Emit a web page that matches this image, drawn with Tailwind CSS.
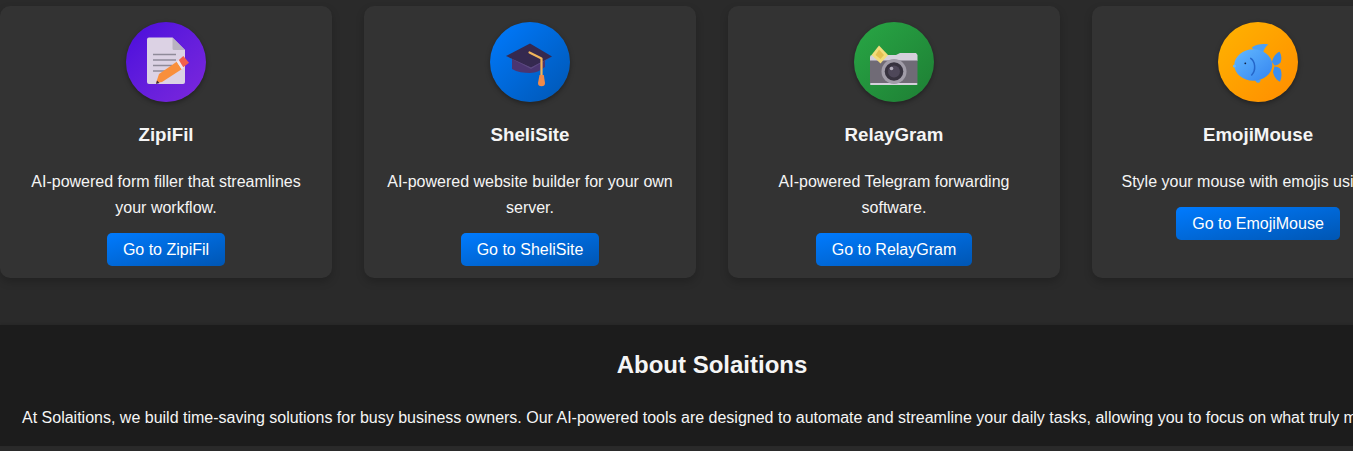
<!doctype html>
<html lang="en">
<head>
<meta charset="utf-8">
<title>Solaitions</title>
<script src="https://cdn.jsdelivr.net/npm/@tailwindcss/browser@4"></script>
</head>
<body class="m-0 h-[451px] overflow-hidden bg-[#2a2a2a] font-['Liberation_Sans',Arial,sans-serif] text-[#f5f5f5]">
<main class="w-[1424px]">
  <section class="grid grid-cols-[332px_332px_332px_332px] gap-8 pt-[6px]">

    <article class="flex h-[272px] flex-col items-center rounded-[10px] bg-[#333333] px-4 pt-4 text-center shadow-[0_4px_8px_rgba(0,0,0,0.2)]">
      <div class="size-20 rounded-full bg-linear-to-br from-[#4a08dc] to-[#7d26dc] shadow-[0_2px_5px_rgba(0,0,0,0.35)]">
        <svg viewBox="0 0 80 80" class="size-20">
          <path d="M23 15.5H46.5L59 28V60a2 2 0 0 1-2 2H23a2 2 0 0 1-2-2V17.5a2 2 0 0 1 2-2Z" fill="#dcd2e4"/>
          <path d="M46.5 15.5 59 28H48a1.5 1.5 0 0 1-1.5-1.5Z" fill="#b9b2c0"/>
          <path d="M27 32.5H50M27 38H50M27 43.5H46M27 49H39" stroke="#8f8a99" stroke-width="1.4"/>
          <path d="M30 61 33 52 50.7 39.7 55.7 47.3 36 60Z" fill="#f98f3c"/>
          <path d="M50.7 39.7 54 37.3 58.5 44.7 55.7 47.3Z" fill="#efe6ee"/>
          <path d="M52.8 38 57.3 34 63 40.7 57.3 45.3Z" fill="#f2604a"/>
          <path d="M30 62 31 58.5 33.5 61Z" fill="#3a2a3a"/>
        </svg>
      </div>
      <h3 class="mt-[18px] text-[18.72px] leading-[29px] font-bold">ZipiFil</h3>
      <p class="mt-5 text-base leading-[26px]">AI-powered form filler that streamlines your workflow.</p>
      <a class="mt-3 rounded-[5px] bg-linear-to-br from-[#007bff] to-[#0056b3] px-4 py-[7px] text-base leading-[19px] text-white">Go to ZipiFil</a>
    </article>

    <article class="flex h-[272px] flex-col items-center rounded-[10px] bg-[#333333] px-4 pt-4 text-center shadow-[0_4px_8px_rgba(0,0,0,0.2)]">
      <div class="size-20 rounded-full bg-linear-to-br from-[#007bff] to-[#0056b3] shadow-[0_2px_5px_rgba(0,0,0,0.35)]">
        <svg viewBox="0 0 80 80" class="size-20">
          <path d="M22 37V47C27 50 34 51 40 51 46 51 51 48 55 45V37Z" fill="#4b3570"/>
          <path d="M16 34 40 21.5 62 34.5 41 45.5Z" fill="#35294f"/>
          <path d="M16 34 41 45.5 62 34.5 41 47Z" fill="#5c4a80"/>
          <path d="M39.5 30.5 51.5 36.5V53" fill="none" stroke="#f0b45a" stroke-width="2.2" stroke-linecap="round" stroke-linejoin="round"/>
          <path d="M49.5 53H53.8L55 61a3.3 3 0 0 1-7 0Z" fill="#f08a4a"/>
        </svg>
      </div>
      <h3 class="mt-[18px] text-[18.72px] leading-[29px] font-bold">SheliSite</h3>
      <p class="mt-5 text-base leading-[26px]">AI-powered website builder for your own server.</p>
      <a class="mt-3 rounded-[5px] bg-linear-to-br from-[#007bff] to-[#0056b3] px-4 py-[7px] text-base leading-[19px] text-white">Go to SheliSite</a>
    </article>

    <article class="flex h-[272px] flex-col items-center rounded-[10px] bg-[#333333] px-4 pt-4 text-center shadow-[0_4px_8px_rgba(0,0,0,0.2)]">
      <div class="size-20 rounded-full bg-linear-to-br from-[#28a745] to-[#1e7e34] shadow-[0_2px_5px_rgba(0,0,0,0.35)]">
        <svg viewBox="0 0 80 80" class="size-20">
          <path d="M16 35a2 2 0 0 1 2-2H42L46 31H62L63.5 33V39H16Z" fill="#d5d0dc"/>
          <rect x="16" y="38.5" width="47.5" height="22.5" fill="#706b76"/>
          <rect x="16" y="61" width="47.5" height="2" rx="1" fill="#d5d0dc"/>
          <path d="M25 23.5 34 33 26.5 41.5 17.5 33Z" fill="#f3dc7c"/>
          <path d="M25 27.5 30 33 26.5 37 21.5 33Z" fill="#e5c052"/>
          <circle cx="40" cy="49.5" r="12.5" fill="#a19ca8"/>
          <circle cx="40" cy="49.5" r="9.3" fill="#37323f"/>
          <circle cx="40" cy="49.5" r="6" fill="#4e4759"/>
          <circle cx="37.5" cy="46.5" r="1.8" fill="#b4aebd"/>
        </svg>
      </div>
      <h3 class="mt-[18px] text-[18.72px] leading-[29px] font-bold">RelayGram</h3>
      <p class="mt-5 text-base leading-[26px]">AI-powered Telegram forwarding software.</p>
      <a class="mt-3 rounded-[5px] bg-linear-to-br from-[#007bff] to-[#0056b3] px-4 py-[7px] text-base leading-[19px] text-white">Go to RelayGram</a>
    </article>

    <article class="flex h-[272px] flex-col items-center rounded-[10px] bg-[#333333] px-4 pt-4 text-center shadow-[0_4px_8px_rgba(0,0,0,0.2)]">
      <div class="size-20 rounded-full bg-linear-to-br from-[#ffb300] to-[#ff8c00] shadow-[0_2px_5px_rgba(0,0,0,0.35)]">
        <svg viewBox="0 0 80 80" class="size-20">
          <defs>
            <linearGradient id="fish" x1="0" y1="0" x2="1" y2="1">
              <stop offset="0" stop-color="#62b8ff"/>
              <stop offset="1" stop-color="#3585f0"/>
            </linearGradient>
          </defs>
          <path d="M33.7 25.5C39 22 45 21.5 50.3 22.5 47 25 45.5 28 45 31.5L38 30Z" fill="#4ba0f7"/>
          <path d="M54 40C55 35 58 31 61.5 29.7 63.5 33 64 37 62.5 40.5 61 42.5 58.5 43.5 56.5 43.5Z" fill="#3a8ff2"/>
          <path d="M56.5 44.5C59 44.5 61.5 45.5 62.7 47.5 64 51.5 63.7 56 62 59.7 58.5 58.5 56 54.5 55 50Z" fill="#3a8ff2"/>
          <path d="M37 58 42.5 58C42.5 61 39 62.5 37 58Z" fill="#4ba0f7"/>
          <ellipse cx="35.3" cy="43" rx="19" ry="15.7" fill="url(#fish)"/>
          <circle cx="16.5" cy="44" r="1.6" fill="#62b8ff"/>
          <circle cx="27.3" cy="41.3" r="0.9" fill="#102040"/>
          <path d="M32.7 36.3C37 39 38.5 48 33.7 53" fill="none" stroke="#2566c9" stroke-width="1.5" stroke-linecap="round"/>
        </svg>
      </div>
      <h3 class="mt-[18px] text-[18.72px] leading-[29px] font-bold">EmojiMouse</h3>
      <p class="mt-5 text-base leading-[26px]">Style your mouse with emojis using AI.</p>
      <a class="mt-3 rounded-[5px] bg-linear-to-br from-[#007bff] to-[#0056b3] px-4 py-[7px] text-base leading-[19px] text-white">Go to EmojiMouse</a>
    </article>
  </section>

  <section class="mt-[47px] h-[121px] bg-[#1c1c1c] px-[22px] pt-[21px] shadow-[0_-1px_2px_rgba(0,0,0,0.1)]">
    <h2 class="text-center text-2xl leading-[38px] font-bold">About Solaitions</h2>
    <p class="mt-[21px] text-base leading-[26px] whitespace-nowrap">At Solaitions, we build time-saving solutions for busy business owners. Our AI-powered tools are designed to automate and streamline your daily tasks, allowing you to focus on what truly matters.</p>
  </section>
</main>
</body>
</html>
